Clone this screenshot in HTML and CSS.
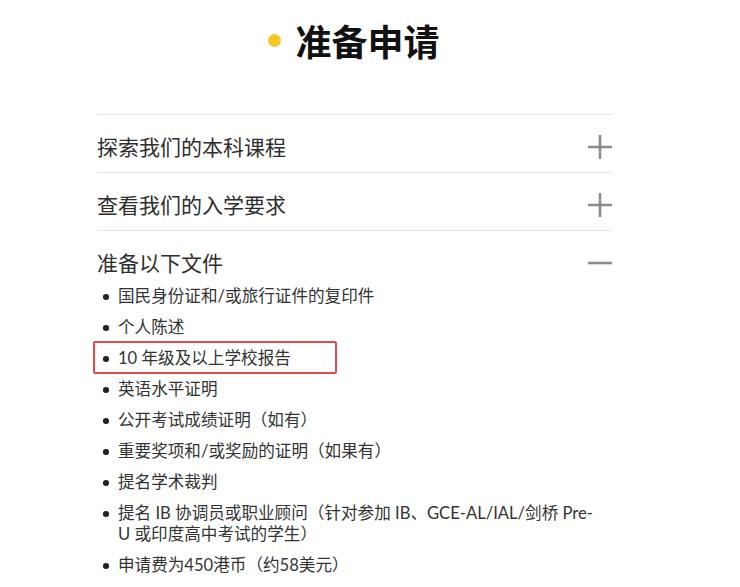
FILE: index.html
```html
<!DOCTYPE html>
<html lang="zh-CN">
<head>
<meta charset="utf-8">
<title>准备申请</title>
<link rel="stylesheet" href="styles.css">
</head>
<body>
<main class="wrap">
  <h1 class="title"><span class="dot"></span><span>准备申请</span></h1>
  <section class="acc">
    <div class="row">
      <span class="row-label">探索我们的本科课程</span>
      <svg class="ico" viewBox="0 0 24 24" width="24" height="24"><path d="M12 0v24M0 12h24" stroke="#8c8c8c" stroke-width="2.6" fill="none"/></svg>
    </div>
    <div class="row">
      <span class="row-label">查看我们的入学要求</span>
      <svg class="ico" viewBox="0 0 24 24" width="24" height="24"><path d="M12 0v24M0 12h24" stroke="#8c8c8c" stroke-width="2.6" fill="none"/></svg>
    </div>
    <div class="row open">
      <span class="row-label">准备以下文件</span>
      <svg class="ico" viewBox="0 0 24 24" width="24" height="24"><path d="M0 12h24" stroke="#8c8c8c" stroke-width="2.6" fill="none"/></svg>
    </div>
    <ul class="docs">
      <li>国民身份证和/或旅行证件的复印件</li>
      <li>个人陈述</li>
      <li class="hl">10 年级及以上学校报告</li>
      <li>英语水平证明</li>
      <li>公开考试成绩证明（如有）</li>
      <li>重要奖项和/或奖励的证明（如果有）</li>
      <li>提名学术裁判</li>
      <li>提名 IB 协调员或职业顾问（针对参加 IB、GCE-AL/IAL/剑桥 Pre-U 或印度高中考试的学生）</li>
      <li>申请费为450港币（约58美元）</li>
    </ul>
  </section>
</main>
</body>
</html>
```

FILE: styles.css
```css
html, body {
  margin: 0;
  padding: 0;
  background: #ffffff;
}
body {
  font-family: "Lato", "Noto Sans CJK SC", sans-serif;
  color: #333333;
}
.wrap {
  width: 515px;
  margin-left: 97px;
}
.title {
  margin: 18px 0 0;
  height: 44px;
  line-height: 44px;
  font-size: 36px;
  font-weight: 700;
  color: #111111;
  display: flex;
  align-items: center;
  justify-content: center;
  gap: 14px;
  font-family: "Noto Sans CJK SC", sans-serif;
}
.dot {
  width: 13px;
  height: 13px;
  border-radius: 50%;
  background: #f8c624;
  margin-left: -1px;
}
.acc {
  margin-top: 52px;
}
.row {
  border-top: 1px solid #e6e6e6;
  height: 57px;
  display: flex;
  align-items: center;
  justify-content: space-between;
}
.row-label {
  font-size: 21px;
  line-height: 25px;
  padding-top: 6px;
  color: #2e2e2e;
}
.ico {
  display: block;
  margin-top: 6px;
}
.docs {
  list-style: none;
  margin: -2px 0 0;
  padding: 0;
}
.docs li {
  position: relative;
  font-size: 16.6px;
  line-height: 21px;
  padding-left: 21px;
  padding-right: 10px;
  margin-bottom: 10px;
  color: #333333;
}
.docs li::before {
  content: "";
  position: absolute;
  left: 6px;
  top: 8px;
  width: 5.5px;
  height: 5.5px;
  border-radius: 50%;
  background: #222222;
}
.docs li.hl::after {
  content: "";
  position: absolute;
  left: -4px;
  top: -7px;
  width: 244px;
  height: 33px;
  box-sizing: border-box;
  border: 2.5px solid #e5484d;
  border-radius: 2px;
}
```
